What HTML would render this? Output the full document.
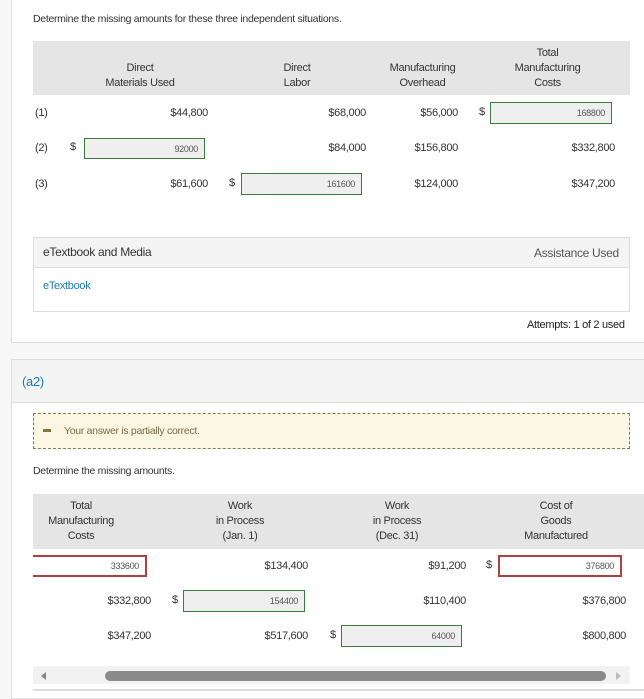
<!DOCTYPE html>
<html><head><style>
*{margin:0;padding:0;box-sizing:border-box}
body{width:644px;height:691px;overflow:hidden;background:#f7f7f7;font-family:"Liberation Sans",sans-serif;color:#333;position:relative;font-size:11px;letter-spacing:-0.3px}
.a{position:absolute;white-space:nowrap}
.card{position:absolute;background:#fff;border:1px solid #ddd}
.hd{position:absolute;background:#e5e5e5}
.c{text-align:center;line-height:15px}
.r{text-align:right}
.in{position:absolute;background:#efefef;border:1px solid #3c7a3c;font-size:9px;color:#555;text-align:right;padding-right:6px;line-height:20px}
.red{background:#fff;border:2px solid #b04040}
</style></head><body>
<div class="card" style="left:11px;top:-2px;width:640px;height:345px"></div>
<div class="a" style="left:33px;top:13px;font-size:10.5px">Determine the missing amounts for these three independent situations.</div>
<div class="hd" style="left:33px;top:41px;width:597px;height:54px"></div>
<div class="a c" style="left:90px;top:61px;width:100px">Direct<br>Materials Used</div>
<div class="a c" style="left:267px;top:61px;width:60px">Direct<br>Labor</div>
<div class="a c" style="left:380px;top:61px;width:85px">Manufacturing<br>Overhead</div>
<div class="a c" style="left:505px;top:46px;width:85px">Total<br>Manufacturing<br>Costs</div>
<div class="a" style="left:35px;top:107px">(1)</div>
<div class="a r" style="left:140px;top:107px;width:68px">$44,800</div>
<div class="a r" style="left:300px;top:107px;width:66px">$68,000</div>
<div class="a r" style="left:390px;top:107px;width:68px">$56,000</div>
<div class="a" style="left:479px;top:106px">$</div>
<div class="in" style="left:490px;top:102px;width:122px;height:22px">168800</div>
<div class="a" style="left:35px;top:142px">(2)</div>
<div class="a" style="left:70px;top:141px">$</div>
<div class="in" style="left:84px;top:138px;width:121px;height:21px">92000</div>
<div class="a r" style="left:300px;top:142px;width:66px">$84,000</div>
<div class="a r" style="left:390px;top:142px;width:68px">$156,800</div>
<div class="a r" style="left:550px;top:142px;width:65px">$332,800</div>
<div class="a" style="left:35px;top:178px">(3)</div>
<div class="a r" style="left:140px;top:178px;width:68px">$61,600</div>
<div class="a" style="left:229px;top:177px">$</div>
<div class="in" style="left:241px;top:173px;width:121px;height:22px">161600</div>
<div class="a r" style="left:390px;top:178px;width:68px">$124,000</div>
<div class="a r" style="left:550px;top:178px;width:65px">$347,200</div>
<div class="a" style="left:33px;top:237px;width:597px;height:75px;border:1px solid #ddd;background:#fff"></div>
<div class="a" style="left:34px;top:238px;width:595px;height:30px;background:#f4f4f4;border-bottom:1px solid #ddd"></div>
<div class="a" style="left:43px;top:245px;font-size:12px">eTextbook and Media</div>
<div class="a" style="left:534px;top:246px;font-size:12px;color:#555">Assistance Used</div>
<div class="a" style="left:43px;top:280px;color:#1a7bb5">eTextbook</div>
<div class="a" style="left:527px;top:319px;color:#222">Attempts: 1 of 2 used</div>
<div class="card" style="left:11px;top:359px;width:640px;height:340px"></div>
<div class="a" style="left:12px;top:360px;width:640px;height:43px;background:#f4f4f4;border-bottom:1px solid #ddd"></div>
<div class="a" style="left:22px;top:374px;font-size:13px;color:#1a7bb5">(a2)</div>
<div class="a" style="left:33px;top:413px;width:597px;height:36px;background:#fcf7e3;border:1px dashed #8a7a50"></div>
<div class="a" style="left:43px;top:429px;width:8px;height:3px;background:#8a7040"></div>
<div class="a" style="left:64px;top:425px;color:#7a6a45;font-size:10.5px">Your answer is partially correct.</div>
<div class="a" style="left:33px;top:465px;font-size:10.5px">Determine the missing amounts.</div>
<div class="hd" style="left:33px;top:494px;width:611px;height:55px"></div>
<div class="a c" style="left:40px;top:499px;width:82px">Total<br>Manufacturing<br>Costs</div>
<div class="a c" style="left:205px;top:499px;width:70px">Work<br>in Process<br>(Jan. 1)</div>
<div class="a c" style="left:362px;top:499px;width:70px">Work<br>in Process<br>(Dec. 31)</div>
<div class="a c" style="left:515px;top:499px;width:82px">Cost of<br>Goods<br>Manufactured</div>
<div class="in red" style="left:33px;top:555px;width:114px;height:22px;line-height:18px;border-left:none">333600</div>
<div class="a r" style="left:240px;top:560px;width:68px">$134,400</div>
<div class="a r" style="left:400px;top:560px;width:66px">$91,200</div>
<div class="a" style="left:486px;top:559px">$</div>
<div class="in red" style="left:498px;top:555px;width:124px;height:22px;line-height:18px">376800</div>
<div class="a r" style="left:80px;top:595px;width:71px">$332,800</div>
<div class="a" style="left:172px;top:594px">$</div>
<div class="in" style="left:183px;top:590px;width:122px;height:22px">154400</div>
<div class="a r" style="left:400px;top:595px;width:66px">$110,400</div>
<div class="a r" style="left:560px;top:595px;width:66px">$376,800</div>
<div class="a r" style="left:80px;top:630px;width:71px">$347,200</div>
<div class="a r" style="left:240px;top:630px;width:68px">$517,600</div>
<div class="a" style="left:330px;top:629px">$</div>
<div class="in" style="left:341px;top:625px;width:121px;height:22px">64000</div>
<div class="a r" style="left:560px;top:630px;width:66px">$800,800</div>
<div class="a" style="left:33px;top:666px;width:597px;height:18px;background:#f2f2f2"></div>
<div class="a" style="left:105px;top:671px;width:501px;height:10px;border-radius:5px;background:#8a8a8a"></div>
<div class="a" style="left:41px;top:672px;width:0;height:0;border-top:4px solid transparent;border-bottom:4px solid transparent;border-right:5px solid #888"></div>
<div class="a" style="left:616px;top:672px;width:0;height:0;border-top:4px solid transparent;border-bottom:4px solid transparent;border-left:5px solid #bbb"></div>
<div class="a" style="left:33px;top:689px;width:611px;height:2px;background:#ddd"></div>
</body></html>
